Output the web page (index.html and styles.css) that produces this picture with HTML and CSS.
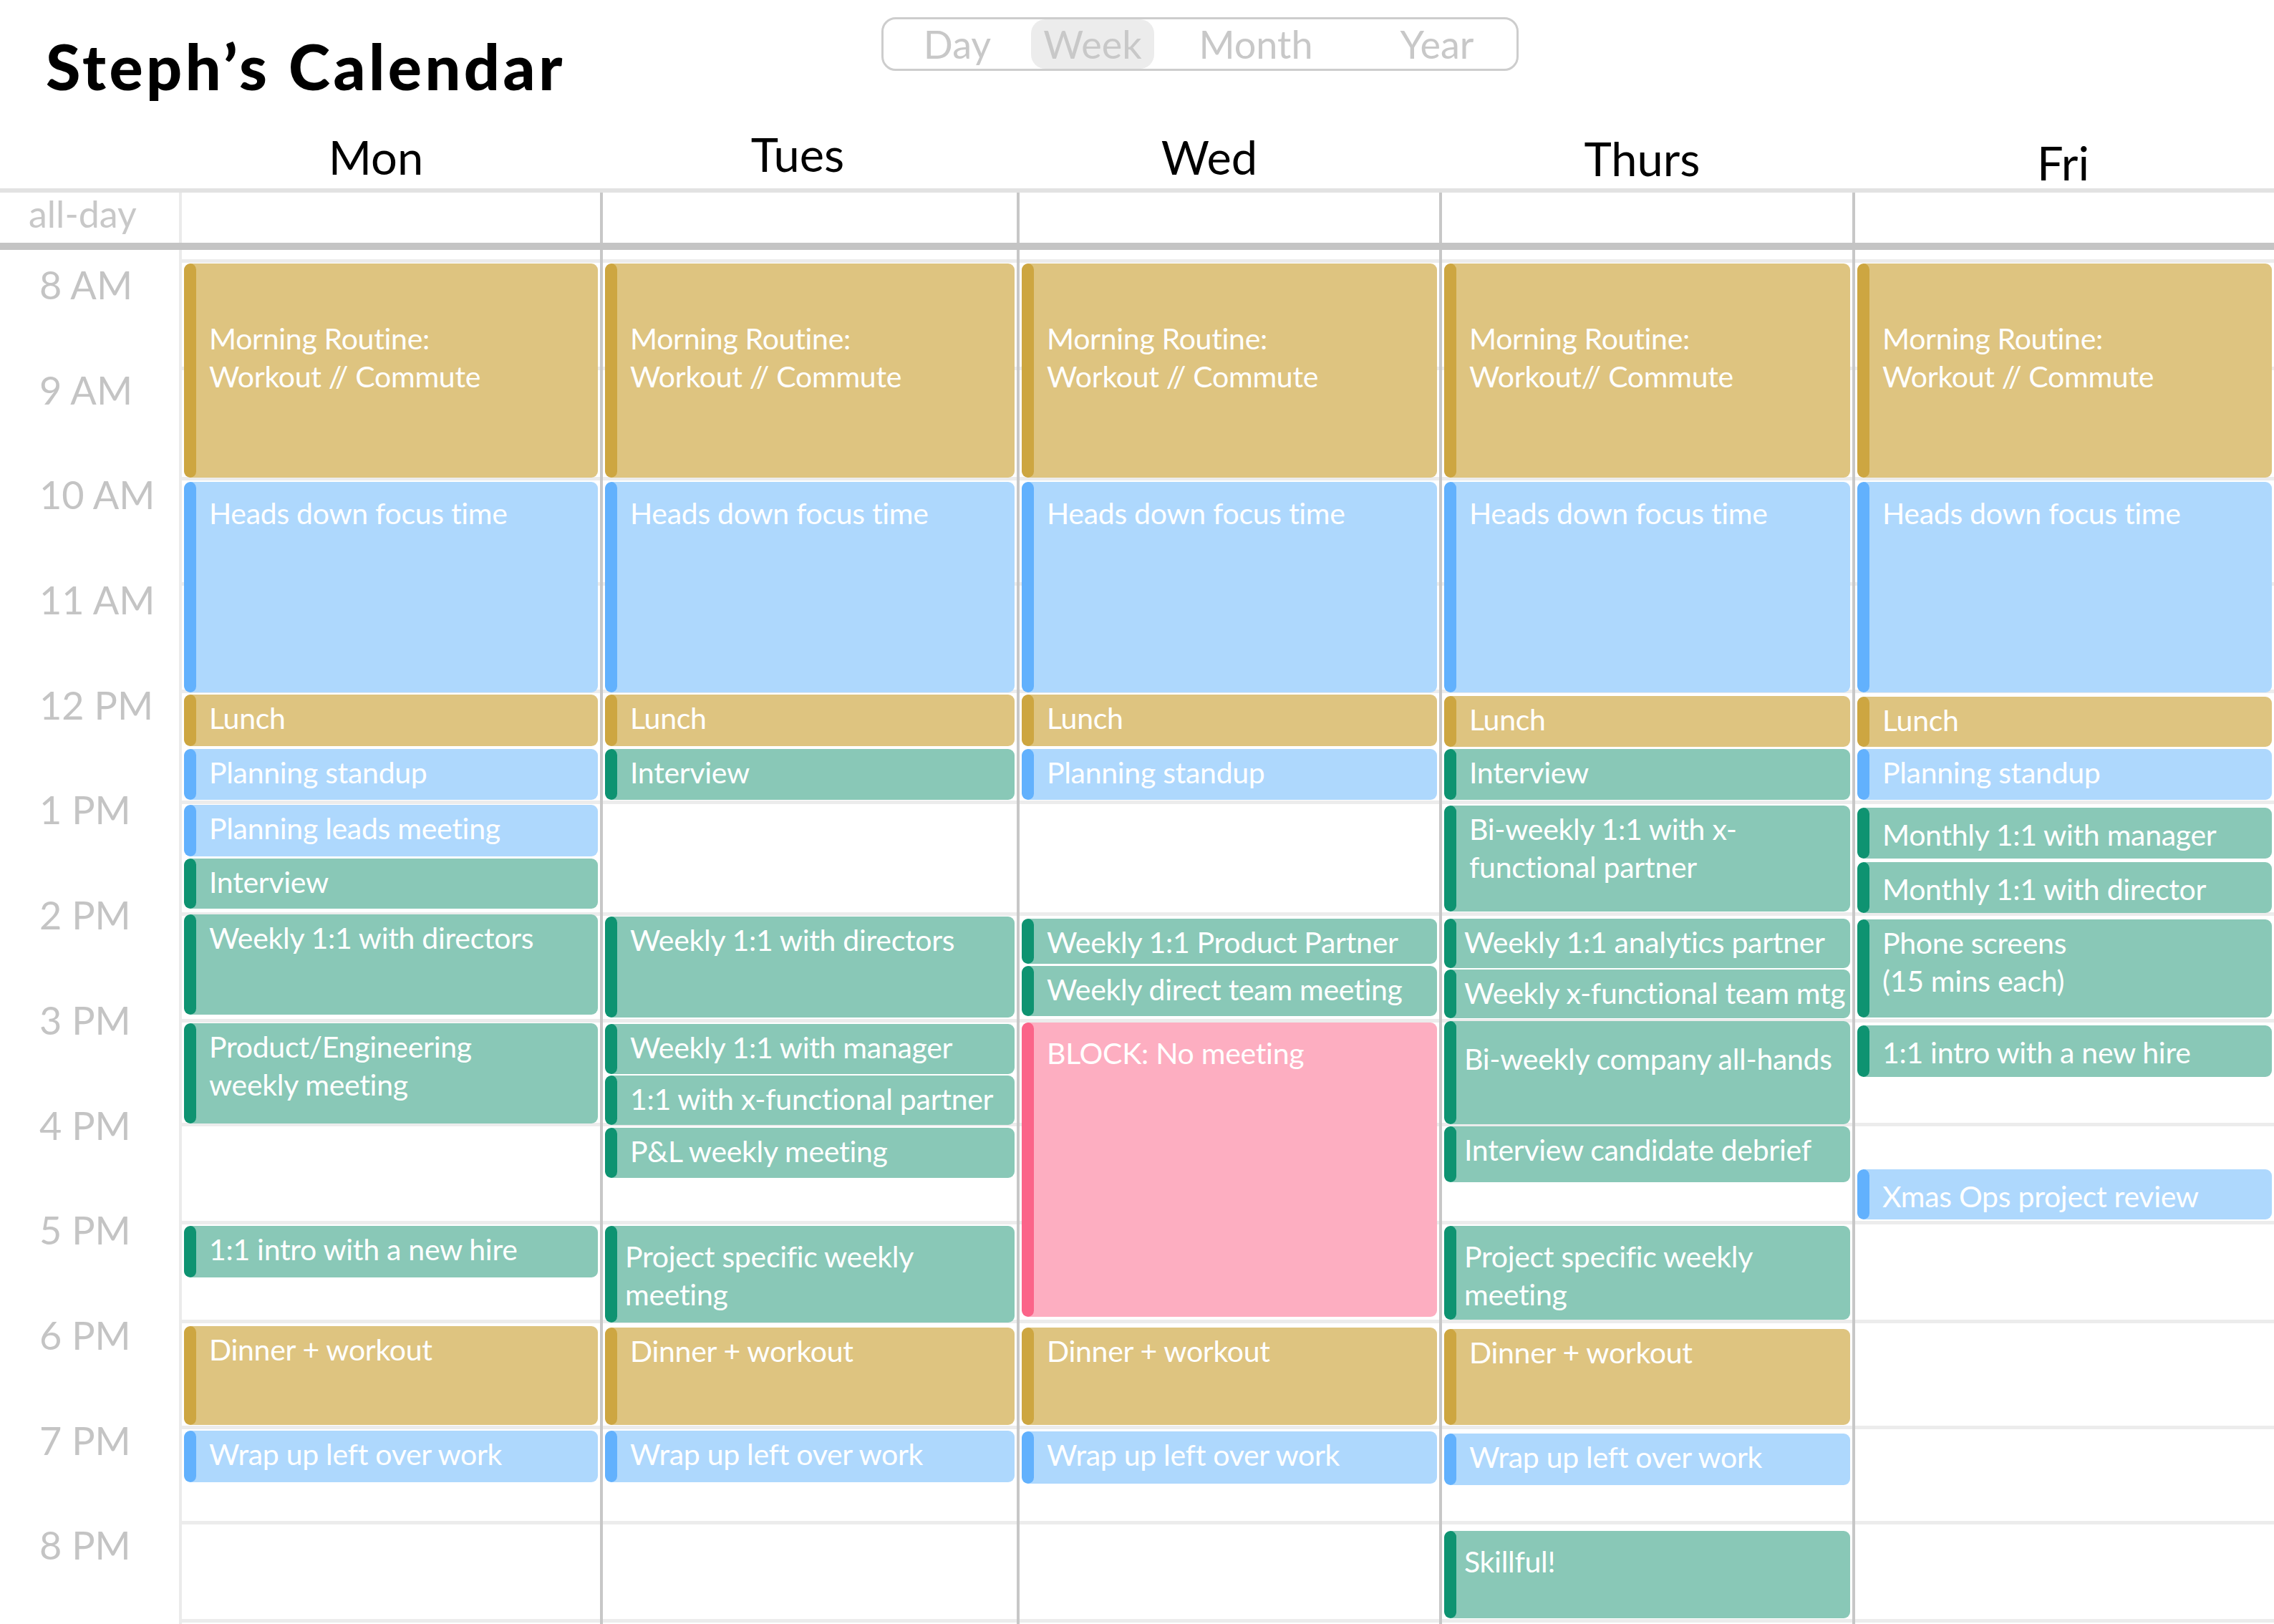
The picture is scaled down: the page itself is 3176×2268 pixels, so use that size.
FILE: index.html
```html
<!DOCTYPE html>
<html lang="en">
<head>
<meta charset="utf-8">
<title>Steph’s Calendar</title>
<link rel="stylesheet" href="styles.css">
</head>
<body>
<header class="topbar">
  <h1 class="title">Steph’s Calendar</h1>
  <nav class="seg">
    <span>Day</span><span class="on">Week</span><span>Month</span><span>Year</span>
  </nav>
</header>

<div class="cols dayhead">
  <div></div>
  <div class="dn dn-mon">Mon</div>
  <div class="dn dn-tue">Tues</div>
  <div class="dn dn-wed">Wed</div>
  <div class="dn dn-thu">Thurs</div>
  <div class="dn dn-fri">Fri</div>
</div>

<div class="cols allday">
  <div class="lab">all-day</div>
  <div class="cell first"></div>
  <div class="cell"></div>
  <div class="cell"></div>
  <div class="cell"></div>
  <div class="cell"></div>
</div>

<main class="cols cal">
  <div class="gutter">
    <div class="tl">8 AM</div>
    <div class="tl">9 AM</div>
    <div class="tl">10 AM</div>
    <div class="tl">11 AM</div>
    <div class="tl">12 PM</div>
    <div class="tl">1 PM</div>
    <div class="tl">2 PM</div>
    <div class="tl">3 PM</div>
    <div class="tl">4 PM</div>
    <div class="tl">5 PM</div>
    <div class="tl">6 PM</div>
    <div class="tl">7 PM</div>
    <div class="tl">8 PM</div>
  </div>

  <div class="lines">
    <div></div>
    <div class="hline"></div><div class="hline"></div><div class="hline"></div><div class="hline"></div>
    <div class="hline"></div><div class="hline"></div><div class="hline"></div><div class="hline"></div>
    <div class="hline"></div><div class="hline"></div><div class="hline"></div><div class="hline"></div>
    <div class="hline"></div><div class="hline"></div>
  </div>

  <section class="day mon">
    <div class="ev gold p-morning" style="top:19px;height:299px">Morning Routine:<br>Workout // Commute</div>
    <div class="ev blue p-focus" style="top:324px;height:294px">Heads down focus time</div>
    <div class="ev gold" style="top:621px;height:72px">Lunch</div>
    <div class="ev blue" style="top:697px;height:71px">Planning standup</div>
    <div class="ev blue" style="top:775px;height:72px">Planning leads meeting</div>
    <div class="ev green" style="top:850px;height:70px">Interview</div>
    <div class="ev green" style="top:928px;height:140px">Weekly 1:1 with directors</div>
    <div class="ev green" style="top:1080px;height:140px">Product/Engineering<br>weekly meeting</div>
    <div class="ev green" style="top:1363px;height:72px">1:1 intro with a new hire</div>
    <div class="ev gold" style="top:1503px;height:138px">Dinner + workout</div>
    <div class="ev blue" style="top:1649px;height:72px">Wrap up left over work</div>
  </section>

  <section class="day tue">
    <div class="ev gold p-morning" style="top:19px;height:299px">Morning Routine:<br>Workout // Commute</div>
    <div class="ev blue p-focus" style="top:324px;height:294px">Heads down focus time</div>
    <div class="ev gold" style="top:621px;height:72px">Lunch</div>
    <div class="ev green" style="top:697px;height:71px">Interview</div>
    <div class="ev green" style="top:931px;height:141px">Weekly 1:1 with directors</div>
    <div class="ev green" style="top:1081px;height:70px">Weekly 1:1 with manager</div>
    <div class="ev green" style="top:1153px;height:69px">1:1 with x-functional partner</div>
    <div class="ev green" style="top:1226px;height:70px">P&amp;L weekly meeting</div>
    <div class="ev green p-tall tight" style="top:1363px;height:135px">Project specific weekly<br>meeting</div>
    <div class="ev gold" style="top:1505px;height:136px">Dinner + workout</div>
    <div class="ev blue" style="top:1649px;height:72px">Wrap up left over work</div>
  </section>

  <section class="day wed">
    <div class="ev gold p-morning" style="top:19px;height:299px">Morning Routine:<br>Workout // Commute</div>
    <div class="ev blue p-focus" style="top:324px;height:294px">Heads down focus time</div>
    <div class="ev gold" style="top:621px;height:72px">Lunch</div>
    <div class="ev blue" style="top:697px;height:71px">Planning standup</div>
    <div class="ev green" style="top:934px;height:63px">Weekly 1:1 Product Partner</div>
    <div class="ev green" style="top:1000px;height:70px">Weekly direct team meeting</div>
    <div class="ev pink p-tall" style="top:1079px;height:411px">BLOCK: No meeting</div>
    <div class="ev gold" style="top:1505px;height:136px">Dinner + workout</div>
    <div class="ev blue" style="top:1650px;height:73px">Wrap up left over work</div>
  </section>

  <section class="day thu">
    <div class="ev gold p-morning" style="top:19px;height:299px">Morning Routine:<br>Workout// Commute</div>
    <div class="ev blue p-focus" style="top:324px;height:294px">Heads down focus time</div>
    <div class="ev gold" style="top:623px;height:71px">Lunch</div>
    <div class="ev green" style="top:697px;height:71px">Interview</div>
    <div class="ev green" style="top:776px;height:148px">Bi-weekly 1:1 with x-<br>functional partner</div>
    <div class="ev green tight" style="top:934px;height:69px">Weekly 1:1 analytics partner</div>
    <div class="ev green tight" style="top:1005px;height:68px">Weekly x-functional team mtg</div>
    <div class="ev green p-allhands tight" style="top:1077px;height:144px">Bi-weekly company all-hands</div>
    <div class="ev green tight" style="top:1224px;height:78px">Interview candidate debrief</div>
    <div class="ev green p-tall tight" style="top:1363px;height:131px">Project specific weekly<br>meeting</div>
    <div class="ev gold" style="top:1507px;height:134px">Dinner + workout</div>
    <div class="ev blue" style="top:1653px;height:72px">Wrap up left over work</div>
    <div class="ev green p-tall tight" style="top:1789px;height:122px">Skillful!</div>
  </section>

  <section class="day fri">
    <div class="ev gold p-morning" style="top:19px;height:299px">Morning Routine:<br>Workout // Commute</div>
    <div class="ev blue p-focus" style="top:324px;height:294px">Heads down focus time</div>
    <div class="ev gold" style="top:624px;height:70px">Lunch</div>
    <div class="ev blue" style="top:697px;height:71px">Planning standup</div>
    <div class="ev green p-mid" style="top:779px;height:71px">Monthly 1:1 with manager</div>
    <div class="ev green p-mid" style="top:855px;height:71px">Monthly 1:1 with director</div>
    <div class="ev green" style="top:935px;height:137px">Phone screens<br>(15 mins each)</div>
    <div class="ev green p-mid" style="top:1083px;height:72px">1:1 intro with a new hire</div>
    <div class="ev blue p-mid" style="top:1284px;height:70px">Xmas Ops project review</div>
  </section>
</main>
</body>
</html>
```

FILE: styles.css
```css
* { box-sizing: border-box; }

html, body { margin: 0; padding: 0; }

body {
  width: 3176px;
  height: 2268px;
  overflow: hidden;
  background: #ffffff;
  color: #000000;
  font-family: Lato, "Liberation Sans", sans-serif;
}

.cols {
  display: grid;
  grid-template-columns: 250px 588px 582px 590px 577px 589px;
}

/* ---------- top bar ---------- */
.topbar {
  display: grid;
  grid-template-columns: 1231px 890px;
  height: 150px;
}

.title {
  margin: 0;
  padding: 48px 0 0 64px;
  font-size: 88px;
  font-weight: 900;
  line-height: 1;
  letter-spacing: 4.5px;
  white-space: nowrap;
}

.seg {
  margin-top: 24px;
  height: 75px;
  border: 3px solid #cdcdcd;
  border-radius: 20px;
  display: grid;
  grid-template-columns: 206px 172px 284px 222px;
}

.seg span {
  text-align: center;
  font-size: 54px;
  line-height: 69px;
  color: #c8c8c8;
}

.seg .on {
  background: #ececec;
  border-radius: 20px;
}

/* ---------- day names ---------- */
.dayhead { height: 113px; }

.dn {
  text-align: center;
  font-size: 65px;
  line-height: 1;
  padding-top: 37px;
}

.dn-mon { padding-right: 38px; }
.dn-tue { padding-right: 30px; padding-top: 33px; }
.dn-wed { padding-right: 52px; }
.dn-thu { padding-right: 10px; padding-top: 39px; }
.dn-fri { padding-top: 45px; }

/* ---------- all-day row ---------- */
.allday {
  height: 86px;
  border-top: 6px solid #e2e2e2;
  border-bottom: 10px solid #c4c4c4;
}

.allday .lab {
  font-size: 52px;
  line-height: 58px;
  color: #c8c8c8;
  padding-left: 40px;
}

.allday .cell { border-left: 4px solid #c7c7c7; }
.allday .cell.first { border-left-color: #ebebeb; }

/* ---------- calendar body ---------- */
.cal { height: 1919px; }

.gutter {
  grid-column: 1;
  grid-row: 1;
  padding-top: 22px;
}

.tl {
  height: 146.7px;
  font-size: 54px;
  line-height: 1;
  color: #c4c4c4;
  padding-left: 55px;
  white-space: nowrap;
}

.lines {
  grid-column: 2 / -1;
  grid-row: 1;
  display: grid;
  grid-template-rows: 13px 150px 154px 147px 150px 155px 156px 149px 145px 137px 138px 148px 133px 137px 7px;
}

.hline { border-top: 5px solid #ececec; }

.day {
  grid-row: 1;
  position: relative;
  border-left: 4px solid #c7c7c7;
}

.day.mon { grid-column: 2; border-left-color: #ebebeb; }
.day.tue { grid-column: 3; }
.day.wed { grid-column: 4; }
.day.thu { grid-column: 5; }
.day.fri { grid-column: 6; }

/* ---------- events ---------- */
.ev {
  position: absolute;
  left: 3px;
  right: 3px;
  border-radius: 9px;
  padding: 6px 6px 0 35px;
  font-size: 41px;
  letter-spacing: -0.3px;
  line-height: 53px;
  color: #ffffff;
  white-space: nowrap;
  overflow: hidden;
}

.ev::before {
  content: "";
  position: absolute;
  left: 0;
  top: 0;
  bottom: 0;
  width: 17px;
  border-radius: 9px;
}

.gold { background: #dec480; }
.gold::before { background: #cda641; }

.blue { background: #aed8fd; }
.blue::before { background: #62b1fd; }

.green { background: #89c8b7; }
.green::before { background: #0e9371; }

.pink { background: #fdaec1; }
.pink::before { background: #fb6489; }

.p-morning { padding-top: 78px; }
.p-focus { padding-top: 17px; }
.p-mid { padding-top: 11px; }
.p-tall { padding-top: 16px; }
.p-allhands { padding-top: 26px; }
.tight { padding-left: 28px; padding-right: 2px; }
```
